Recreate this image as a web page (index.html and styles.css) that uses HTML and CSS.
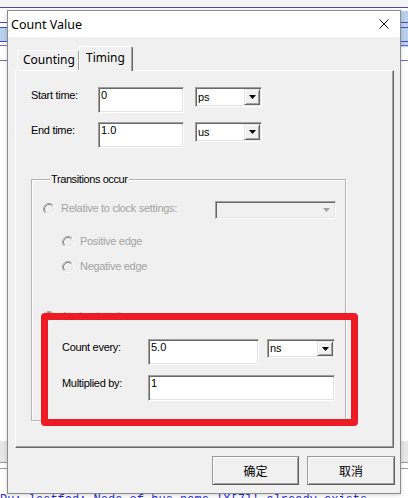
FILE: index.html
```html
<!DOCTYPE html>
<html>
<head>
<meta charset="utf-8">
<link rel="stylesheet" href="styles.css">
</head>
<body>
<svg class="defs" width="0" height="0">
  <symbol id="radio" viewBox="0 0 12 12">
    <circle cx="6" cy="6" r="4" fill="#f0f0f0"/>
    <path d="M9.89 2.11 A5.5 5.5 0 0 0 2.11 9.89" fill="none" stroke="#a0a0a0"/>
    <path d="M2.11 9.89 A5.5 5.5 0 0 0 9.89 2.11" fill="none" stroke="#ffffff"/>
    <path d="M9.18 2.82 A4.5 4.5 0 0 0 2.82 9.18" fill="none" stroke="#8a8a8a"/>
    <path d="M2.82 9.18 A4.5 4.5 0 0 0 9.18 2.82" fill="none" stroke="#e3e3e3"/>
  </symbol>
  <symbol id="arrow" viewBox="0 0 7 4">
    <polygon points="0,0 7,0 3.5,4"/>
  </symbol>
</svg>

<div class="dialog">
  <div class="titlebar">
    <span class="title">Count Value</span>
    <svg class="close" width="10" height="10" viewBox="0 0 10 10"><path d="M0.5 0.5 L9.5 9.5 M9.5 0.5 L0.5 9.5" stroke="#1a1a1a" stroke-width="1"/></svg>
  </div>
  <div class="client">
    <div class="tabs">
      <div class="tab">Counting</div>
      <div class="tab active">Timing</div>
    </div>
    <div class="panel">
      <div class="row">
        <span class="lbl">Start time:</span>
        <div class="edit w-time">0</div>
        <div class="combo w-unit"><span class="val">ps</span><span class="dd"><svg width="7" height="4"><use href="#arrow"/></svg></span></div>
      </div>
      <div class="row">
        <span class="lbl">End time:</span>
        <div class="edit w-time">1.0</div>
        <div class="combo w-unit"><span class="val">us</span><span class="dd"><svg width="7" height="4"><use href="#arrow"/></svg></span></div>
      </div>

      <fieldset class="group">
        <legend>Transitions occur</legend>
        <div class="opt opt-clock">
          <svg class="radio" width="12" height="12"><use href="#radio"/></svg>
          <span class="dis">Relative to clock settings:</span>
          <div class="combo combo-dis"><span class="val"></span><span class="dd"><svg width="7" height="4"><use href="#arrow"/></svg></span></div>
        </div>
        <div class="opt opt-sub opt-pos">
          <svg class="radio" width="12" height="12"><use href="#radio"/></svg>
          <span class="dis">Positive edge</span>
        </div>
        <div class="opt opt-sub opt-neg">
          <svg class="radio" width="12" height="12"><use href="#radio"/></svg>
          <span class="dis">Negative edge</span>
        </div>
        <div class="opt opt-abs">
          <svg class="radio" width="12" height="12"><use href="#radio"/></svg>
          <span class="dis">At absolute time:</span>
        </div>
        <div class="row row-count">
          <span class="lbl lbl-wide">Count every:</span>
          <div class="edit w-count">5.0</div>
          <div class="combo w-unit2"><span class="val">ns</span><span class="dd"><svg width="7" height="4"><use href="#arrow"/></svg></span></div>
        </div>
        <div class="row row-mult">
          <span class="lbl lbl-wide">Multiplied by:</span>
          <div class="edit w-mult">1</div>
        </div>
      </fieldset>
    </div>
    <div class="buttons">
      <div class="btn">确定</div>
      <div class="btn">取消</div>
    </div>
  </div>
</div>
<div class="log">Du: lostfcd: Node of bus name 'X[7]' already exists.</div>
<div class="highlight"></div>
</body>
</html>
```

FILE: styles.css
```css
html, body {
  margin: 0;
  padding: 0;
}
body {
  width: 408px;
  height: 498px;
  overflow: hidden;
  position: relative;
  font-family: "Liberation Sans", Arial, sans-serif;
  font-size: 11px;
  color: #000;
  background:
    linear-gradient(#4b4bb4, #4b4bb4) 0 7px / 100% 1px no-repeat,
    linear-gradient(#4b4bb4, #4b4bb4) 0 22px / 100% 1px no-repeat,
    linear-gradient(#4b4bb4, #4b4bb4) 0 27px / 100% 1px no-repeat,
    linear-gradient(#4b4bb4, #4b4bb4) 0 41px / 100% 1px no-repeat,
    linear-gradient(#6b6bc4, #6b6bc4) 0 45px / 100% 1px no-repeat,
    linear-gradient(#6b6bc4, #6b6bc4) 0 60px / 100% 1px no-repeat,
    linear-gradient(#b9d1ee, #b9d1ee) 0 28px / 100% 13px no-repeat,
    linear-gradient(#b9d1ee, #b9d1ee) 400px 11px / 8px 36px no-repeat,
    linear-gradient(#9a9a9a, #9a9a9a) 0 462px / 100% 1px no-repeat,
    linear-gradient(#9a9a9a, #9a9a9a) 0 468px / 100% 1px no-repeat,
    linear-gradient(#e6e6e6, #e6e6e6) 0 441px / 100% 21px no-repeat,
    linear-gradient(#f4f4f4, #f4f4f4) 0 0 / 100% 7px no-repeat,
    #ffffff;
}
.defs {
  position: absolute;
  width: 0;
  height: 0;
}

/* dialog window */
.dialog {
  position: relative;
  z-index: 1;
  margin: 10px 0 0 7px;
  width: 394px;
  height: 484px;
  box-sizing: border-box;
  border: 1px solid #8c8c8c;
  background: #f0f0f0;
  display: flex;
  flex-direction: column;
  box-shadow: 0 1px 4px rgba(0, 0, 0, 0.18);
}
.titlebar {
  height: 26px;
  flex: none;
  background: #ffffff;
  display: flex;
  align-items: center;
  justify-content: space-between;
  padding: 0 11px 0 3px;
}
.title {
  font-family: "Noto Sans", "Open Sans", sans-serif;
  font-size: 12.5px;
  color: #000;
}
.close {
  display: block;
}
.client {
  flex: 1;
  padding: 9px 6px 0 7px;
}

/* tabs */
.tabs {
  display: flex;
  align-items: flex-end;
  height: 24px;
  padding-left: 2px;
}
.tab {
  box-sizing: border-box;
  height: 20px;
  width: 62px;
  padding-left: 5px;
  border-top: 1px solid #ffffff;
  border-left: 1px solid #ffffff;
  border-right: 1px solid #a0a0a0;
  border-radius: 2px 2px 0 0;
  font-family: "Noto Sans", "Open Sans", sans-serif;
  font-size: 12px;
  line-height: 18px;
  background: #f0f0f0;
}
.tab.active {
  position: relative;
  z-index: 1;
  height: 25px;
  width: 54px;
  margin-bottom: -1px;
  padding-left: 6px;
  line-height: 22px;
  border-right: 1px solid #696969;
  box-shadow: inset -1px 0 0 #a0a0a0;
}

/* tab page */
.panel {
  box-sizing: border-box;
  height: 378px;
  padding: 16px 0 0 15px;
  border-top: 1px solid #ffffff;
  border-left: 1px solid #ffffff;
  border-right: 1px solid #696969;
  border-bottom: 1px solid #696969;
  box-shadow: inset -1px -1px 0 #a0a0a0;
}
.row {
  display: flex;
  align-items: flex-start;
  height: 26px;
}
.row + .row {
  margin-top: 9px;
}
.lbl {
  width: 67px;
  padding-top: 2px;
  line-height: 13px;
  letter-spacing: -0.3px;
  flex: none;
}
.lbl-wide {
  width: 86px;
}
.edit {
  box-sizing: border-box;
  height: 26px;
  background: #ffffff;
  border: 1px solid;
  border-color: #a0a0a0 #ffffff #ffffff #a0a0a0;
  box-shadow: inset 1px 1px 0 #696969, inset -1px -1px 0 #e3e3e3;
  padding: 1px 2px 0 2px;
  line-height: 13px;
  flex: none;
}
.w-time { width: 86px; }
.w-count { width: 111px; }
.w-mult { width: 187px; }

.combo {
  box-sizing: border-box;
  height: 20px;
  display: flex;
  align-items: stretch;
  background: #ffffff;
  border: 1px solid;
  border-color: #a0a0a0 #ffffff #ffffff #a0a0a0;
  box-shadow: inset 1px 1px 0 #696969, inset -1px -1px 0 #e3e3e3;
  padding: 1px 1px 1px 1px;
  flex: none;
}
.combo .val {
  flex: 1;
  padding-left: 1px;
  line-height: 16px;
  letter-spacing: -0.2px;
}
.combo .dd {
  width: 16px;
  box-sizing: border-box;
  background: #f0f0f0;
  border-top: 1px solid #e3e3e3;
  border-left: 1px solid #e3e3e3;
  border-right: 1px solid #696969;
  border-bottom: 1px solid #696969;
  box-shadow: inset 1px 1px 0 #ffffff, inset -1px -1px 0 #a0a0a0;
  display: flex;
  align-items: center;
  justify-content: center;
}
.combo .dd svg {
  display: block;
  fill: #000;
}
.w-unit {
  width: 67px;
  margin-left: 11px;
}
.w-unit2 {
  width: 68px;
  margin-left: 8px;
  height: 19px;
}
.w-unit2 .val { line-height: 15px; }

/* group box */
.group {
  box-sizing: border-box;
  width: 315px;
  margin: 25px 0 0 0;
  padding: 15px 9px 19px 11px;
  min-width: 0;
  border: 1px solid #b4b4b4;
  box-shadow: inset 1px 1px 0 #ffffff, 1px 1px 0 #ffffff;
}
.group legend {
  margin-left: 7px;
  padding: 0 1px;
  line-height: 13px;
  letter-spacing: -0.4px;
}
.opt {
  display: flex;
  align-items: flex-start;
  height: 16px;
}
.opt .radio {
  display: block;
  flex: none;
  margin-top: 2px;
  margin-right: 6px;
}
.dis {
  color: #a3a3a3;
  line-height: 13px;
  padding-top: 1px;
  letter-spacing: -0.3px;
}
.opt-clock {
  height: 18px;
}
.opt-sub {
  padding-left: 19px;
}
.opt-pos { margin-top: 15px; }
.opt-neg { margin-top: 9px; }
.opt-abs { margin-top: 34px; }

.combo-dis {
  margin-left: auto;
  width: 121px;
  height: 18px;
  background: #f0f0f0;
}
.combo-dis .dd {
  border: none;
  box-shadow: none;
  background: #f0f0f0;
}
.combo-dis .dd svg {
  fill: #a0a0a0;
}

.row-count {
  margin-top: 14px;
  padding-left: 19px;
}
.row.row-mult {
  margin-top: 10px;
  padding-left: 19px;
}

/* buttons */
.buttons {
  display: flex;
  justify-content: flex-end;
  gap: 8px;
  margin: 8px -1px 0 0;
}
.btn {
  box-sizing: border-box;
  width: 87px;
  height: 29px;
  border: 1px solid;
  border-color: #9a9a9a #5f5f5f #5f5f5f #9a9a9a;
  box-shadow: inset 1px 1px 0 #ffffff, inset -1px -1px 0 #a0a0a0;
  background: #f0f0f0;
  font-family: "Noto Sans CJK SC", "Noto Sans", sans-serif;
  font-size: 12px;
  display: flex;
  align-items: center;
  justify-content: center;
}
.btn + .btn { width: 88px; }

/* background log line */
.log {
  margin-top: -1px;
  font-family: "Liberation Mono", monospace;
  font-size: 12px;
  line-height: 14px;
  color: #2a2ad0;
  white-space: nowrap;
}

/* red annotation overlay */
.highlight {
  position: absolute;
  left: 41px;
  top: 313px;
  width: 317px;
  height: 113px;
  box-sizing: border-box;
  border: 7px solid #ed1c24;
  border-radius: 4px;
  z-index: 2;
}
```
